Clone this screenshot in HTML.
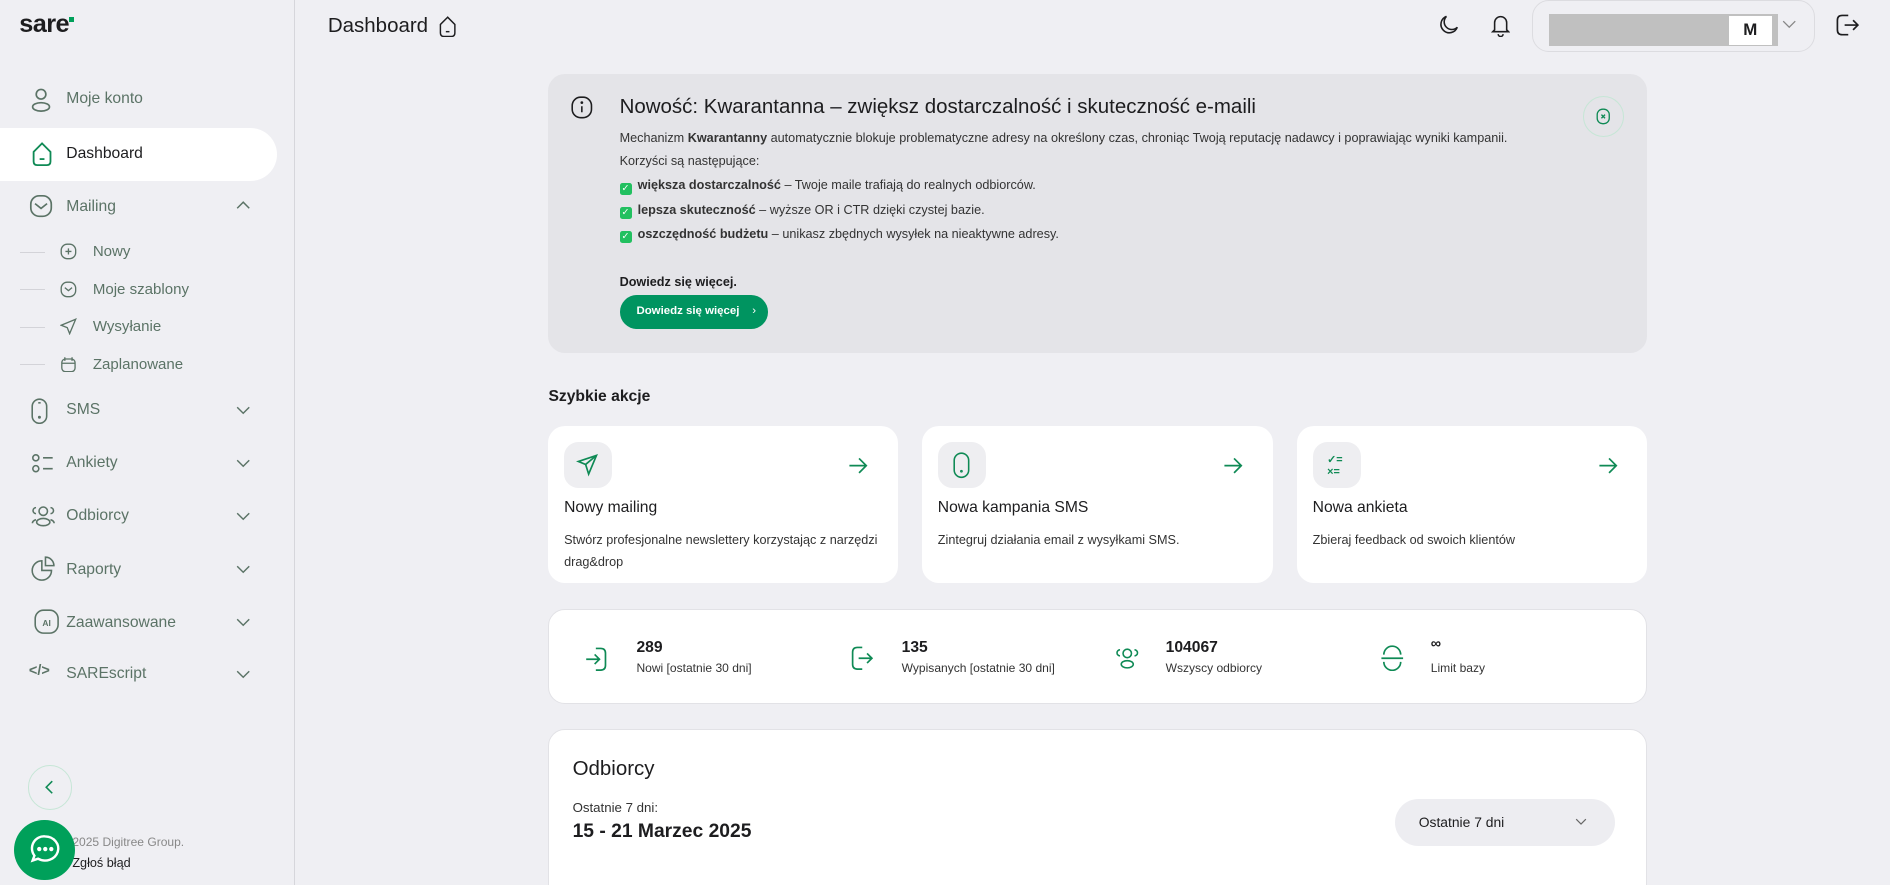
<!DOCTYPE html>
<html><head><meta charset="utf-8"><style>
html{zoom:1.2054;overflow:hidden}
*{box-sizing:border-box;margin:0;padding:0}
body{width:1568px;height:734px;overflow:hidden;background:#efeff3;font-family:"Liberation Sans",sans-serif;color:#1d1d1f;position:relative}
.a{position:absolute}
.side{left:0;top:0;width:245px;height:734px;border-right:1px solid #d6d6db}
.nav{position:absolute;left:55px;font-size:13px;color:#5b7366}
.ic{position:absolute}
.chev{position:absolute;left:196px}
.sub{position:absolute;left:77px;font-size:12.5px;color:#5b7366}
.line{position:absolute;left:17px;width:20px;height:1px;background:#d3d3d8}
.card{position:absolute;background:#fff;border-radius:14px}
.t11{font-size:10.5px;color:#333}
</style></head><body>
<div class="a side">
 <div class="a" style="left:16px;top:8px;font-size:21px;font-weight:bold;letter-spacing:-0.5px;color:#1d1d1f">sare<span style="display:inline-block;width:4px;height:4px;background:#00a05a;vertical-align:top;margin-top:6px"></span></div>
 <svg class="ic" style="left:24px;top:72px" width="20" height="22" viewBox="0 0 20 22" fill="none" stroke="#5b7366" stroke-width="1.4"><circle cx="10" cy="6" r="4"/><ellipse cx="10" cy="16.5" rx="7" ry="3.5"/></svg>
 <div class="nav" style="top:75px">Moje konto</div>
 <div class="a" style="left:0;top:106px;width:230px;height:44px;background:#fff;border-radius:0 22px 22px 0"></div>
 <svg class="ic" style="left:25px;top:117px" width="20" height="22" viewBox="0 0 20 22" fill="none" stroke="#0f8a55" stroke-width="1.5"><path d="M10 2L3 9v8q0 3 3 3h8q3 0 3-3V9z"/><path d="M8 15h4"/></svg>
 <div class="nav" style="top:120px;color:#1d1d1f">Dashboard</div>
 <svg class="ic" style="left:24px;top:161px" width="20" height="20" viewBox="0 0 20 20" fill="none" stroke="#5b7366" stroke-width="1.4"><rect x="1.5" y="1.5" width="17" height="17" rx="7"/><path d="M5 8l5 4 5-4"/></svg>
 <div class="nav" style="top:164px">Mailing</div>
 <svg class="chev" style="top:167px" width="12" height="8" viewBox="0 0 12 8" fill="none" stroke="#5b7366" stroke-width="1.2"><path d="M1 6l5-5 5 5"/></svg>
 <div class="line" style="top:209px"></div><svg class="ic" style="left:50px;top:202px" width="14" height="14" viewBox="0 0 14 14" fill="none" stroke="#5b7366" stroke-width="1.1"><rect x="1" y="1" width="12" height="12" rx="5"/><path d="M7 4.5v5M4.5 7h5"/></svg><div class="sub" style="top:202px">Nowy</div>
 <div class="line" style="top:240px"></div><svg class="ic" style="left:50px;top:233px" width="14" height="14" viewBox="0 0 14 14" fill="none" stroke="#5b7366" stroke-width="1.1"><rect x="1" y="1" width="12" height="12" rx="5"/><path d="M4 5.5l3 2.5 3-2.5"/></svg><div class="sub" style="top:233px">Moje szablony</div>
 <div class="line" style="top:271px"></div><svg class="ic" style="left:50px;top:264px" width="14" height="14" viewBox="0 0 14 14" fill="none" stroke="#5b7366" stroke-width="1.1"><path d="M13 1L1 6l5 2 2 5z"/></svg><div class="sub" style="top:264px">Wysyłanie</div>
 <div class="line" style="top:302px"></div><svg class="ic" style="left:50px;top:295px" width="14" height="14" viewBox="0 0 14 14" fill="none" stroke="#5b7366" stroke-width="1.1"><rect x="1.5" y="2.5" width="11" height="10.5" rx="3"/><path d="M4 1v3M10 1v3M1.5 6h11"/></svg><div class="sub" style="top:295px">Zaplanowane</div>
 <svg class="ic" style="left:26px;top:330px" width="14" height="22" viewBox="0 0 14 22" fill="none" stroke="#5b7366" stroke-width="1.3"><rect x="1" y="1" width="12" height="20" rx="6"/><circle cx="7" cy="16" r=".6"/><path d="M6 4h2"/></svg>
 <div class="nav" style="top:333px">SMS</div>
 <svg class="chev" style="top:337px" width="12" height="8" viewBox="0 0 12 8" fill="none" stroke="#5b7366" stroke-width="1.2"><path d="M1 1l5 5 5-5"/></svg>
 <svg class="ic" style="left:26px;top:376px" width="20" height="18" viewBox="0 0 20 18" fill="none" stroke="#5b7366" stroke-width="1.3"><circle cx="4" cy="4" r="2.5"/><circle cx="4" cy="13" r="2.5"/><path d="M10 4h8M10 13h8"/></svg>
 <div class="nav" style="top:377px">Ankiety</div>
 <svg class="chev" style="top:381px" width="12" height="8" viewBox="0 0 12 8" fill="none" stroke="#5b7366" stroke-width="1.2"><path d="M1 1l5 5 5-5"/></svg>
 <svg class="ic" style="left:25px;top:418px" width="22" height="20" viewBox="0 0 22 20" fill="none" stroke="#5b7366" stroke-width="1.3"><circle cx="11" cy="6" r="3.5"/><ellipse cx="11" cy="15" rx="5.5" ry="3"/><path d="M5 3a2.5 2.5 0 000 5M17 3a2.5 2.5 0 010 5M2 16q0-2 3-3M20 16q0-2-3-3"/></svg>
 <div class="nav" style="top:421px">Odbiorcy</div>
 <svg class="chev" style="top:425px" width="12" height="8" viewBox="0 0 12 8" fill="none" stroke="#5b7366" stroke-width="1.2"><path d="M1 1l5 5 5-5"/></svg>
 <svg class="ic" style="left:26px;top:461px" width="22" height="22" viewBox="0 0 22 22" fill="none" stroke="#5b7366" stroke-width="1.3"><path d="M9 4a8 8 0 108 8H9z"/><path d="M12 1a7 7 0 017 7h-7z"/></svg>
 <div class="nav" style="top:465px">Raporty</div>
 <svg class="chev" style="top:469px" width="12" height="8" viewBox="0 0 12 8" fill="none" stroke="#5b7366" stroke-width="1.2"><path d="M1 1l5 5 5-5"/></svg>
 <svg class="ic" style="left:28px;top:505px" width="22" height="22" viewBox="0 0 22 22" fill="none" stroke="#5b7366" stroke-width="1.3"><rect x="1" y="1" width="19" height="19" rx="7"/><text x="10.5" y="14" font-size="7" font-weight="bold" text-anchor="middle" fill="#5b7366" stroke="none" font-family="Liberation Sans">AI</text></svg>
 <div class="nav" style="top:509px">Zaawansowane</div>
 <svg class="chev" style="top:513px" width="12" height="8" viewBox="0 0 12 8" fill="none" stroke="#5b7366" stroke-width="1.2"><path d="M1 1l5 5 5-5"/></svg>
 <div class="a" style="left:24px;top:550px;font-size:12px;color:#5b7366;font-weight:bold">&lt;/&gt;</div>
 <div class="nav" style="top:552px">SAREscript</div>
 <svg class="chev" style="top:556px" width="12" height="8" viewBox="0 0 12 8" fill="none" stroke="#5b7366" stroke-width="1.2"><path d="M1 1l5 5 5-5"/></svg>
 <div class="a" style="left:23px;top:635px;width:37px;height:37px;border:1px solid #c6e6d6;border-radius:50%"></div>
 <svg class="ic" style="left:37px;top:647px" width="8" height="12" viewBox="0 0 8 12" fill="none" stroke="#0f8a55" stroke-width="1.3"><path d="M6 1L1 6l5 5"/></svg>
 <div class="a" style="left:60px;top:693px;font-size:10px;color:#888">2025 Digitree Group.</div>
 <div class="a" style="left:60px;top:710px;font-size:10.5px;color:#1d1d1f">Zgłoś błąd</div>
 <div class="a" style="left:12px;top:680px;width:50px;height:50px;border-radius:50%;background:#00a05a"></div>
 <svg class="ic" style="left:24px;top:692px" width="27" height="26" viewBox="0 0 27 26" fill="none" stroke="#fff" stroke-width="2"><path d="M13.5 2a11 10 0 11-6 18.5L3 22l1.5-4A10 10 0 0113.5 2z"/><circle cx="8.5" cy="12.5" r=".8" fill="#fff"/><circle cx="13.5" cy="12.5" r=".8" fill="#fff"/><circle cx="18.5" cy="12.5" r=".8" fill="#fff"/></svg>
</div>

<div class="a" style="left:272px;top:12px;font-size:17px;color:#1d1d1f">Dashboard</div>
<svg class="a" style="left:363px;top:13px" width="16" height="18" viewBox="0 0 16 18" fill="none" stroke="#1d1d1f" stroke-width="1.2"><path d="M8 1L2 7v7q0 3 3 3h6q3 0 3-3V7z"/><path d="M6.5 13h3"/></svg>
<svg class="a" style="left:1193px;top:12px" width="18" height="18" viewBox="0 0 18 18" fill="none" stroke="#1d1d1f" stroke-width="1.3"><path d="M7 2a7 7 0 109 9A6 6 0 017 2z"/></svg>
<svg class="a" style="left:1237px;top:11px" width="16" height="20" viewBox="0 0 16 20" fill="none" stroke="#1d1d1f" stroke-width="1.3"><path d="M3 14V8a5 5 0 0110 0v6l1.5 1.5h-13z"/><path d="M6 17.5a2 2 0 004 0"/></svg>
<div class="a" style="left:1271px;top:0;width:235px;height:43px;border:1px solid #dcdce0;border-radius:14px"></div>
<div class="a" style="left:1285px;top:12px;width:190px;height:26px;background:#c0c0c0"></div>
<div class="a" style="left:1434px;top:13px;width:36px;height:24px;background:#fff;font-weight:bold;font-size:14px;text-align:center;line-height:24px">M</div>
<svg class="a" style="left:1478px;top:17px" width="12" height="8" viewBox="0 0 12 8" fill="none" stroke="#888" stroke-width="1.1"><path d="M1 1l5 5 5-5"/></svg>
<svg class="a" style="left:1522px;top:11px" width="20" height="20" viewBox="0 0 20 20" fill="none" stroke="#1d1d1f" stroke-width="1.4"><path d="M11 2H6q-4 0-4 4v8q0 4 4 4h5"/><path d="M8 10h11M15 6l4 4-4 4"/></svg>

<div class="a" style="left:455px;top:61px;width:911px;height:232px;background:#e4e4e8;border-radius:14px"></div>
<svg class="a" style="left:474px;top:80px" width="18" height="19" viewBox="0 0 18 19" fill="none" stroke="#1d1d1f" stroke-width="1.3"><rect x="1" y="1" width="16" height="17" rx="7"/><path d="M9 8.5v5"/><circle cx="9" cy="5.5" r=".5" fill="#1d1d1f"/></svg>
<div class="a" style="left:514px;top:79px;font-size:17px;color:#1d1d1f">Nowość: Kwarantanna – zwiększ dostarczalność i skuteczność e-maili</div>
<div class="a t11" style="left:514px;top:109px">Mechanizm <b>Kwarantanny</b> automatycznie blokuje problematyczne adresy na określony czas, chroniąc Twoją reputację nadawcy i poprawiając wyniki kampanii.</div>
<div class="a t11" style="left:514px;top:128px">Korzyści są następujące:</div>
<div class="a t11" style="left:514px;top:148px"><span style="display:inline-block;width:10px;height:10px;background:#22c060;border-radius:2px;color:#fff;font-size:8px;line-height:10px;text-align:center;vertical-align:-1px;margin-right:5px">✓</span><b>większa dostarczalność</b> – Twoje maile trafiają do realnych odbiorców.</div>
<div class="a t11" style="left:514px;top:168px"><span style="display:inline-block;width:10px;height:10px;background:#22c060;border-radius:2px;color:#fff;font-size:8px;line-height:10px;text-align:center;vertical-align:-1px;margin-right:5px">✓</span><b>lepsza skuteczność</b> – wyższe OR i CTR dzięki czystej bazie.</div>
<div class="a t11" style="left:514px;top:188px"><span style="display:inline-block;width:10px;height:10px;background:#22c060;border-radius:2px;color:#fff;font-size:8px;line-height:10px;text-align:center;vertical-align:-1px;margin-right:5px">✓</span><b>oszczędność budżetu</b> – unikasz zbędnych wysyłek na nieaktywne adresy.</div>
<div class="a" style="left:514px;top:228px;font-size:10.5px;font-weight:bold">Dowiedz się więcej.</div>
<div class="a" style="left:514px;top:245px;width:123px;height:28px;background:#009460;border-radius:14px;color:#fff;font-size:9.5px;font-weight:bold;line-height:28px;padding-left:14px">Dowiedz się więcej <span style="margin-left:8px;font-weight:normal">›</span></div>
<div class="a" style="left:1313px;top:80px;width:34px;height:34px;border:1px solid #c6e6d6;border-radius:50%"></div>
<svg class="a" style="left:1324px;top:90px" width="12" height="14" viewBox="0 0 12 14" fill="none" stroke="#0f8a55" stroke-width="1.1"><rect x="1" y="1" width="10" height="12" rx="4.5"/><path d="M4.5 5.5l3 3M7.5 5.5l-3 3"/></svg>

<div class="a" style="left:455px;top:322px;font-size:13px;font-weight:bold">Szybkie akcje</div>

<div class="card" style="left:455px;top:353px;width:290px;height:131px"></div>
<div class="card" style="left:765px;top:353px;width:291px;height:131px"></div>
<div class="card" style="left:1076px;top:353px;width:290px;height:131px"></div>
<div class="a" style="left:468px;top:367px;width:40px;height:38px;background:#eeeef1;border-radius:12px"></div>
<div class="a" style="left:778px;top:367px;width:40px;height:38px;background:#eeeef1;border-radius:12px"></div>
<div class="a" style="left:1089px;top:367px;width:40px;height:38px;background:#eeeef1;border-radius:12px"></div>
<svg class="a" style="left:478px;top:376px" width="20" height="20" viewBox="0 0 20 20" fill="none" stroke="#0f8a55" stroke-width="1.4"><path d="M17 2L2 7l6 2.5 2.5 8z"/><path d="M8 9.5l9-7.5"/></svg>
<svg class="a" style="left:791px;top:375px" width="14" height="22" viewBox="0 0 14 22" fill="none" stroke="#0f8a55" stroke-width="1.3"><rect x="1" y="1" width="12" height="20" rx="6"/><circle cx="7" cy="16" r=".5"/></svg>
<div class="a" style="left:1101px;top:377px;font-size:9px;color:#0f8a55;line-height:10px;font-weight:bold">✓=<br>×=</div>
<svg class="a" style="left:703px;top:378px" width="18" height="16" viewBox="0 0 18 16" fill="none" stroke="#0f8a55" stroke-width="1.4"><path d="M2 8h14M10 2l6 6-6 6"/></svg>
<svg class="a" style="left:1014px;top:378px" width="18" height="16" viewBox="0 0 18 16" fill="none" stroke="#0f8a55" stroke-width="1.4"><path d="M2 8h14M10 2l6 6-6 6"/></svg>
<svg class="a" style="left:1325px;top:378px" width="18" height="16" viewBox="0 0 18 16" fill="none" stroke="#0f8a55" stroke-width="1.4"><path d="M2 8h14M10 2l6 6-6 6"/></svg>
<div class="a" style="left:468px;top:414px;font-size:13px">Nowy mailing</div>
<div class="a" style="left:778px;top:414px;font-size:13px">Nowa kampania SMS</div>
<div class="a" style="left:1089px;top:414px;font-size:13px">Nowa ankieta</div>
<div class="a t11" style="left:468px;top:440px;width:275px;line-height:18px">Stwórz profesjonalne newslettery korzystając z narzędzi drag&amp;drop</div>
<div class="a t11" style="left:778px;top:440px;line-height:18px">Zintegruj działania email z wysyłkami SMS.</div>
<div class="a t11" style="left:1089px;top:440px;line-height:18px">Zbieraj feedback od swoich klientów</div>

<div class="card" style="left:455px;top:505px;width:911px;height:79px;border:1px solid #e2e2e6"></div>
<svg class="a" style="left:485px;top:536px" width="20" height="22" viewBox="0 0 20 22" fill="none" stroke="#0f8a55" stroke-width="1.4"><path d="M9 2h4q4 0 4 4v10q0 4-4 4H9"/><path d="M1 11h11M8 7l4 4-4 4"/></svg>
<svg class="a" style="left:704px;top:535px" width="20" height="22" viewBox="0 0 20 22" fill="none" stroke="#0f8a55" stroke-width="1.4"><path d="M11 2H7q-4 0-4 4v10q0 4 4 4h4"/><path d="M8 11h11M15 7l4 4-4 4"/></svg>
<svg class="a" style="left:924px;top:535px" width="22" height="22" viewBox="0 0 22 22" fill="none" stroke="#0f8a55" stroke-width="1.3"><circle cx="11" cy="7" r="3.5"/><ellipse cx="11" cy="16" rx="5" ry="3"/><path d="M5 4a2.5 2.5 0 000 5M17 4a2.5 2.5 0 010 5"/></svg>
<svg class="a" style="left:1144px;top:535px" width="22" height="22" viewBox="0 0 22 22" fill="none" stroke="#0f8a55" stroke-width="1.4"><path d="M4 8a7 7 0 0114 0M4 14a7 7 0 0014 0M2 11h18"/></svg>
<div class="a" style="left:528px;top:530px;font-size:13px;font-weight:bold">289</div><div class="a" style="left:528px;top:548px;font-size:10px;color:#333">Nowi [ostatnie 30 dni]</div>
<div class="a" style="left:748px;top:530px;font-size:13px;font-weight:bold">135</div><div class="a" style="left:748px;top:548px;font-size:10px;color:#333">Wypisanych [ostatnie 30 dni]</div>
<div class="a" style="left:967px;top:530px;font-size:13px;font-weight:bold">104067</div><div class="a" style="left:967px;top:548px;font-size:10px;color:#333">Wszyscy odbiorcy</div>
<div class="a" style="left:1187px;top:528px;font-size:12px;font-weight:bold">∞</div><div class="a" style="left:1187px;top:548px;font-size:10px;color:#333">Limit bazy</div>

<div class="card" style="left:455px;top:605px;width:911px;height:160px;border:1px solid #e2e2e6"></div>
<div class="a" style="left:475px;top:628px;font-size:17px">Odbiorcy</div>
<div class="a" style="left:475px;top:664px;font-size:11px;color:#333">Ostatnie 7 dni:</div>
<div class="a" style="left:475px;top:681px;font-size:16px;font-weight:bold">15 - 21 Marzec 2025</div>
<div class="a" style="left:1157px;top:663px;width:183px;height:39px;background:#ededf1;border-radius:20px;font-size:11.5px;line-height:39px;padding-left:20px">Ostatnie 7 dni</div>
<svg class="a" style="left:1307px;top:679px" width="10" height="7" viewBox="0 0 10 7" fill="none" stroke="#666" stroke-width="1"><path d="M1 1l4 4 4-4"/></svg>
</body></html>
